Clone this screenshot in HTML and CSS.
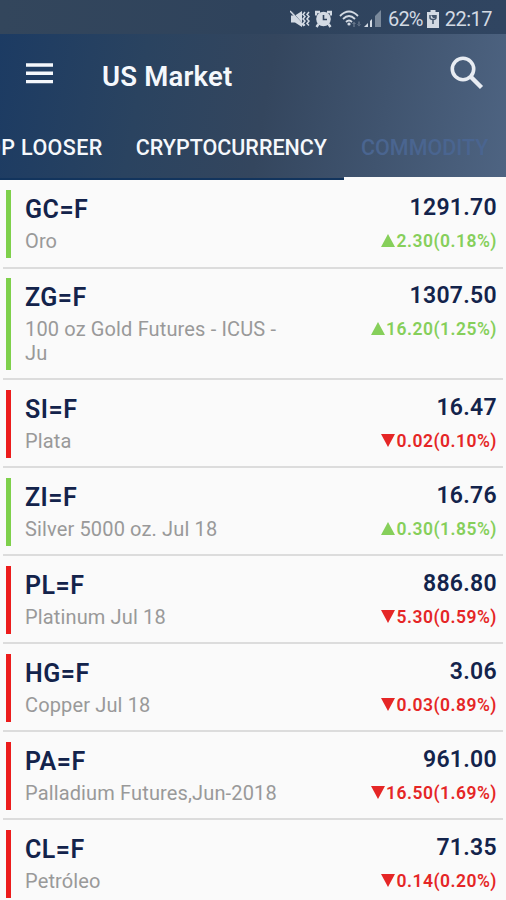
FILE: index.html
```html
<!DOCTYPE html>
<html lang="en">
<head>
  <meta charset="UTF-8">
  <meta name="viewport" content="width=device-width, initial-scale=1.0">
  <title>US Market</title>
  <link rel="stylesheet" href="styles.css">
</head>
<body>
  <div class="status-bar">
    <svg class="icon-mute" width="20" height="18" viewBox="0 0 20 18">
      <path d="M1 5.500h4l7-4.500v16l-7-4.500H1z" fill="#d3dae3"/>
      <path d="M2 1.500l12 14" stroke="#5b6b80" stroke-width="1"/>
      <path d="M0 1l14 15" stroke="#d3dae3" stroke-width="1.400"/>
      <path d="M15 2l-2 2.500 2 2-2 2.500 2 2-2 2.500 2 2M19 2l-2 2.500 2 2-2 2.500 2 2-2 2.500 2 2" fill="none" stroke="#d3dae3" stroke-width="1.500"/>
    </svg>
    <svg class="icon-alarm" width="17" height="18" viewBox="0 0 17 18">
      <circle cx="8.500" cy="9" r="7.300" fill="#d3dae3"/>
      <path d="M1 5.500V2h4M16 5.500V2h-4M3.500 14l-2 3M13.500 14l2 3" fill="none" stroke="#d3dae3" stroke-width="2.400"/>
      <path d="M8.500 5v4.500H12" fill="none" stroke="#30435c" stroke-width="1.600"/>
    </svg>
    <svg class="icon-wifi" width="23" height="18" viewBox="0 0 23 18">
      <g fill="none" stroke="#d3dae3" stroke-width="1.800">
        <path d="M1 6Q10 -3 19 6"/>
        <path d="M4 9q6-6 12 0"/>
        <path d="M7 12q3-3 6 0"/>
      </g>
      <circle cx="10" cy="14" r="1.600" fill="#d3dae3"/>
      <path d="M13 14l2-2.500 2 2.500zM14.300 14h1.400v3h-1.400zM18 14l2 2.500 2-2.500zM19.300 11.500h1.400v3h-1.400z" fill="#66768a"/>
    </svg>
    <svg class="icon-signal" width="18" height="18" viewBox="0 0 18 18">
      <path d="M0 17l4-4v4zM6 11l2-2v8H6z" fill="#d3dae3"/>
      <path d="M11 6l6-6v17h-6z" fill="#7a899b"/>
    </svg>
    <span class="battery-level">62%</span>
    <svg class="icon-battery" width="12" height="18" viewBox="0 0 12 18">
      <path d="M3.500 0h5v2H12v16H0V2h3.500z" fill="#d3dae3"/>
      <path d="M3 5v2.500q0 2 3 2t3-2V5M6 9v5" fill="none" stroke="#43556c" stroke-width="1.500"/>
      <path d="M4 5h5v3H6z" fill="#43556c"/>
    </svg>
    <span class="clock">22:17</span>
  </div>

  <header class="header">
    <div class="toolbar">
      <svg class="menu-icon" width="28" height="21" viewBox="0 0 28 21">
        <path d="M0 2h27M0 10.300h27M0 18.600h27" stroke="#f5f8fc" stroke-width="3.400"/>
      </svg>
      <h1>US Market</h1>
      <svg class="search-icon" width="34" height="34" viewBox="0 0 34 34">
        <circle cx="13" cy="13" r="10.700" fill="none" stroke="#e8ecf2" stroke-width="3.600"/>
        <path d="M20.500 20.500L31.500 31.500" stroke="#e8ecf2" stroke-width="4.400"/>
      </svg>
    </div>
    <nav class="tabs">
      <a class="tab tab-looser">TOP LOOSER</a>
      <a class="tab tab-crypto">CRYPTOCURRENCY</a>
      <a class="tab active">COMMODITY</a>
    </nav>
  </header>

  <ul class="quotes">
    <li class="quote up">
      <div class="info"><h2>GC=F</h2><p>Oro</p></div>
      <div class="values"><span class="price">1291.70</span><span class="change">2.30(0.18%)</span></div>
    </li>
    <li class="quote up">
      <div class="info"><h2>ZG=F</h2><p>100 oz Gold Futures - ICUS - Ju</p></div>
      <div class="values"><span class="price">1307.50</span><span class="change">16.20(1.25%)</span></div>
    </li>
    <li class="quote down">
      <div class="info"><h2>SI=F</h2><p>Plata</p></div>
      <div class="values"><span class="price">16.47</span><span class="change">0.02(0.10%)</span></div>
    </li>
    <li class="quote up">
      <div class="info"><h2>ZI=F</h2><p>Silver 5000 oz. Jul 18</p></div>
      <div class="values"><span class="price">16.76</span><span class="change">0.30(1.85%)</span></div>
    </li>
    <li class="quote down">
      <div class="info"><h2>PL=F</h2><p>Platinum Jul 18</p></div>
      <div class="values"><span class="price">886.80</span><span class="change">5.30(0.59%)</span></div>
    </li>
    <li class="quote down">
      <div class="info"><h2>HG=F</h2><p>Copper Jul 18</p></div>
      <div class="values"><span class="price">3.06</span><span class="change">0.03(0.89%)</span></div>
    </li>
    <li class="quote down">
      <div class="info"><h2>PA=F</h2><p>Palladium Futures,Jun-2018</p></div>
      <div class="values"><span class="price">961.00</span><span class="change">16.50(1.69%)</span></div>
    </li>
    <li class="quote down">
      <div class="info"><h2>CL=F</h2><p>Petróleo</p></div>
      <div class="values"><span class="price">71.35</span><span class="change">0.14(0.20%)</span></div>
    </li>
  </ul>
</body>
</html>
```

FILE: styles.css
```css
* {
  box-sizing: border-box;
}
body {
  font-family: Roboto, "Liberation Sans", sans-serif;
  margin: 0;
  height: 900px;
  overflow: hidden;
  background-color: #fafafa;
}
h1, h2, p, ul {
  margin: 0;
  padding: 0;
}
svg {
  display: block;
  flex: none;
}
.status-bar {
  display: flex;
  align-items: center;
  justify-content: flex-end;
  height: 34px;
  padding: 3px 14px 0 0;
  background: linear-gradient(90deg, #33465c, #2f435c 50%, #304561);
  color: #d3dae3;
  font-size: 20px;
}
.icon-alarm {
  margin-left: 5px;
}
.icon-wifi {
  margin-left: 7px;
}
.icon-signal {
  margin-left: 2px;
}
.battery-level {
  margin-left: 6px;
  letter-spacing: -0.8px;
}
.icon-battery {
  margin: 0 6px 0 4px;
}
.clock {
  letter-spacing: -0.5px;
}
.header {
  height: 146px;
  background: linear-gradient(100deg, #1c3b63, #2a4360 28%, #34465e 52%, #40546f 75%, #4e6482);
}
.toolbar {
  display: flex;
  align-items: center;
  height: 80px;
  padding: 0 22px 0 26px;
}
.menu-icon {
  margin-bottom: 2px;
}
.toolbar h1 {
  flex: 1;
  padding: 4px 0 0 48px;
  color: #f5f8fc;
  font-size: 27.5px;
  font-weight: 600;
  letter-spacing: 0.2px;
}
.search-icon {
  margin-bottom: 3px;
}
.tabs {
  display: flex;
  justify-content: flex-end;
  height: 66px;
  overflow: hidden;
}
.tab {
  flex: none;
  padding: 21px 17px 0 16px;
  border-bottom: 2px solid #12345d;
  color: #f5f8fc;
  font-size: 21.5px;
  font-weight: 500;
  line-height: 26px;
  white-space: nowrap;
}
.tab-looser {
  letter-spacing: 0.4px;
}
.tab.active {
  width: 162px;
  padding-left: 17px;
  border-bottom: 3px solid #fafafa;
  color: #4a6590;
}
.quotes {
  list-style: none;
}
.quote {
  display: flex;
  justify-content: space-between;
  margin: 0 3px;
  padding: 10px 6px 8px 3px;
  border-bottom: 2px solid #dcdcdc;
}
.quote:first-child {
  padding-bottom: 9px;
}
.quote:nth-child(2) {
  padding-top: 9px;
}
.info {
  width: 290px;
  min-height: 68px;
  padding: 5px 14px 0 14px;
  border-left: 5px solid #7ed04b;
}
.down .info {
  border-left-color: #ec1c1c;
}
.info h2 {
  color: #13234b;
  font-size: 25px;
  font-weight: 600;
  line-height: 30px;
  letter-spacing: 0.5px;
}
.info p {
  padding: 4px 0 5px;
  color: #999;
  font-size: 20px;
  line-height: 24px;
  letter-spacing: 0.14px;
}
.values {
  display: flex;
  flex-direction: column;
  align-items: flex-end;
  font-weight: 600;
}
.price {
  padding-top: 4px;
  color: #13234b;
  font-size: 23px;
  line-height: 28px;
  letter-spacing: 0.3px;
}
.change {
  display: flex;
  align-items: center;
  padding-top: 8px;
  color: #86cf5a;
  font-size: 17.5px;
  line-height: 22px;
  letter-spacing: 0.5px;
}
.change::before {
  content: "";
  margin: 0 1px 1px 0;
  border: 7px solid transparent;
  border-top: 0;
  border-bottom: 13px solid #86cf5a;
}
.down .change {
  color: #e52626;
}
.down .change::before {
  border-top: 13px solid #e52626;
  border-bottom: 0;
}
```
